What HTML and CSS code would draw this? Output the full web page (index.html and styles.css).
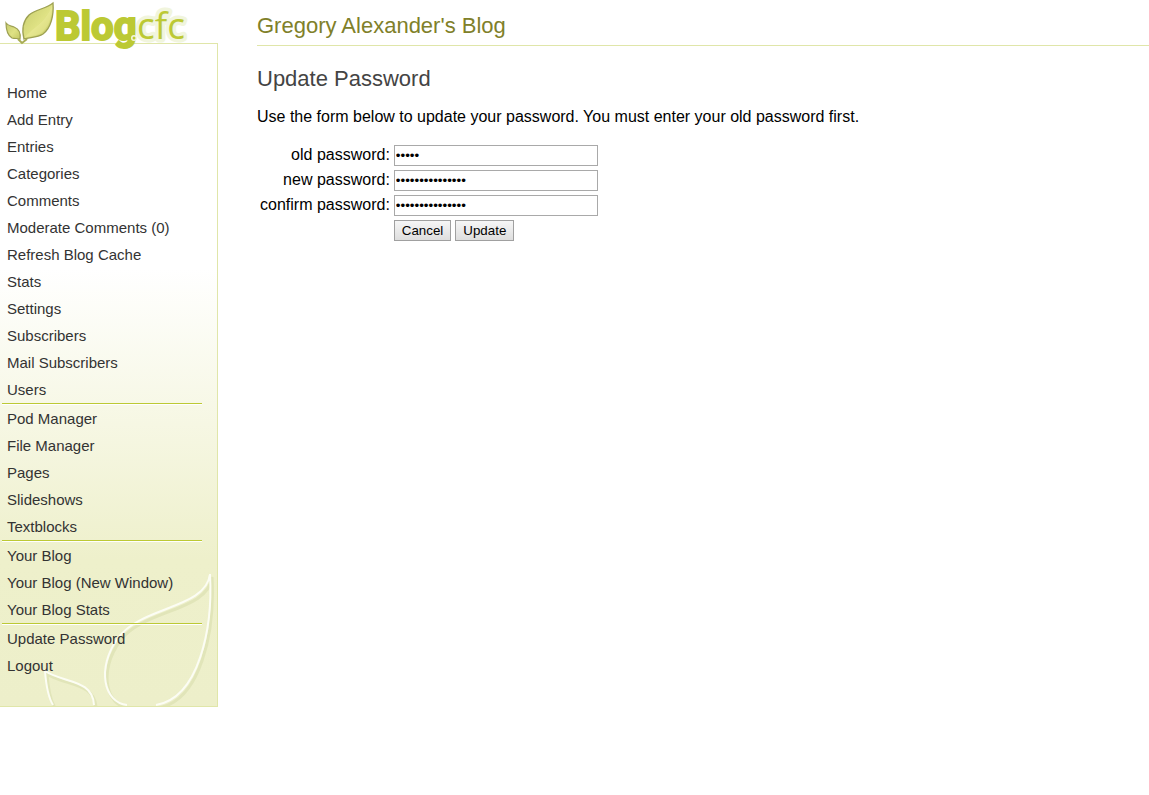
FILE: index.html
```html
<!DOCTYPE html>
<html lang="en">
<head>
<meta charset="utf-8">
<title>Gregory Alexander's Blog - Update Password</title>
<link rel="stylesheet" href="styles.css">
</head>
<body>
<div class="layout">
  <div class="side">
    <svg class="logo" width="200" height="60" viewBox="0 0 200 60" role="img" aria-label="Blog.cfc">
      <defs>
        <linearGradient id="leaf" x1="0" y1="0" x2="1" y2="1">
          <stop offset="0" stop-color="#c5ca6c"/>
          <stop offset="0.55" stop-color="#dfe284"/>
          <stop offset="1" stop-color="#c3c762"/>
        </linearGradient>
      </defs>
      <path d="M24 39C22 31 22 22 29 15C36 9 46 9 53 3C54 15 51 28 43 34C37 38 29 37 24 39Z" fill="url(#leaf)" stroke="#9da052" stroke-width="1.3"/>
      <path d="M20 39C21 33 19 29 14 27C11 26 8 26 6 23C6 29 7 35 12 38C15 39 18 38 20 39Z" fill="url(#leaf)" stroke="#9da052" stroke-width="1.2"/>
      <path d="M25 37C33 28 46 22 52 6C52 18 48 28 41 33C36 36 29 36 25 37Z" fill="#f0eda0" opacity="0.4"/>
      <path d="M18 39L22 43L27 39" fill="none" stroke="#a9ad55" stroke-width="2"/>
      <text class="logo-cfc" x="137" y="39">cfc</text>
      <text class="logo-blog" x="55" y="40">Blog</text>
      <circle cx="134" cy="38" r="3" fill="#f3f6df"/>
      <circle cx="134" cy="38" r="1.500" fill="#bcc934"/>
    </svg>
    <nav class="panel">
      <svg class="leaves" width="217" height="140" viewBox="0 0 217 140" aria-hidden="true">
        <g fill="none" stroke="#e1e5b9" stroke-width="3" transform="translate(2 3)">
          <path d="M127 139C104 137 96 102 118 72C141 40 206 43 210 8C213 62 199 132 156 139"/>
          <path d="M53 139C48 131 46 118 45 105C63 117 93 113 94 139"/>
        </g>
        <g fill="none" stroke="#fcfdf4" stroke-width="2">
          <path d="M127 139C104 137 96 102 118 72C141 40 206 43 210 8C213 62 199 132 156 139"/>
          <path d="M53 139C48 131 46 118 45 105C63 117 93 113 94 139"/>
        </g>
      </svg>
      <ul class="menu">
        <li><a href="#">Home</a></li>
        <li><a href="#">Add Entry</a></li>
        <li><a href="#">Entries</a></li>
        <li><a href="#">Categories</a></li>
        <li><a href="#">Comments</a></li>
        <li><a href="#">Moderate Comments (0)</a></li>
        <li><a href="#">Refresh Blog Cache</a></li>
        <li><a href="#">Stats</a></li>
        <li><a href="#">Settings</a></li>
        <li><a href="#">Subscribers</a></li>
        <li><a href="#">Mail Subscribers</a></li>
        <li><a href="#">Users</a></li>
      </ul>
      <ul class="menu ruled">
        <li><a href="#">Pod Manager</a></li>
        <li><a href="#">File Manager</a></li>
        <li><a href="#">Pages</a></li>
        <li><a href="#">Slideshows</a></li>
        <li><a href="#">Textblocks</a></li>
      </ul>
      <ul class="menu ruled">
        <li><a href="#">Your Blog</a></li>
        <li><a href="#">Your Blog (New Window)</a></li>
        <li><a href="#">Your Blog Stats</a></li>
      </ul>
      <ul class="menu ruled">
        <li><a href="#">Update Password</a></li>
        <li><a href="#">Logout</a></li>
      </ul>
    </nav>
  </div>
  <main class="content">
    <h1 class="blog-title">Gregory Alexander's Blog</h1>
    <h2 class="page-title">Update Password</h2>
    <p class="intro">Use the form below to update your password. You must enter your old password first.</p>
    <form class="form">
      <label for="oldpassword">old password:</label>
      <input class="field" type="password" id="oldpassword" value="abcde">
      <label for="newpassword">new password:</label>
      <input class="field" type="password" id="newpassword" value="abcdefghijklmno">
      <label for="confirmpassword">confirm password:</label>
      <input class="field" type="password" id="confirmpassword" value="abcdefghijklmno">
      <div class="actions">
        <button class="btn" type="button">Cancel</button>
        <button class="btn" type="submit">Update</button>
      </div>
    </form>
  </main>
</div>
</body>
</html>
```
FILE: styles.css
```css
* {
  box-sizing: border-box;
}

body {
  margin: 0;
  background: #fff;
  color: #000;
  font-family: "Liberation Sans", Arial, sans-serif;
  font-size: 16px;
}

.layout {
  display: flex;
  align-items: flex-start;
  gap: 39px;
}

.side {
  flex: 0 0 218px;
  padding-top: 43px;
  position: relative;
}

.logo {
  position: absolute;
  top: 0;
  left: 0;
  z-index: 1;
}

.logo-blog {
  font: bold 40px Roboto, sans-serif;
  fill: #bcc934;
  stroke: #bcc934;
  stroke-width: 2px;
}

.logo-cfc {
  font: 37px "Open Sans", "Noto Sans", sans-serif;
  fill: #bcc934;
  stroke: #f1f5dd;
  stroke-width: 7px;
  stroke-linejoin: round;
  paint-order: stroke;
}

.panel {
  position: relative;
  padding: 35px 15px 27px 2px;
  border: 1px solid #e0e6a9;
  border-left: 0;
  background: linear-gradient(#fff 34%, #eef0cb 78%, #edefca);
}

.leaves {
  position: absolute;
  right: 0;
  bottom: 0;
}

.menu {
  position: relative;
  margin: 0;
  padding: 0;
  list-style: none;
}

.ruled {
  border-top: 1px solid #bcc934;
  box-shadow: inset 0 1px #fff;
  padding-top: 1px;
}

.menu a {
  display: block;
  padding: 0 5px;
  font-size: 15px;
  line-height: 27px;
  color: #333;
  text-decoration: none;
}

.content {
  flex: 1;
  min-width: 0;
}

.blog-title,
.page-title {
  margin: 0;
  font-size: 22px;
  font-weight: normal;
  line-height: 26px;
}

.blog-title {
  padding: 13px 0 6px;
  border-bottom: 1px solid #e0e6a9;
  color: #808029;
}

.page-title {
  margin-top: 20px;
  color: #444;
}

.intro {
  margin: 16px 0;
  line-height: 18px;
}

.form {
  display: grid;
  grid-template-columns: max-content max-content;
  gap: 4px;
  padding: 3px;
  line-height: 19px;
}

.form label {
  text-align: right;
}

.field {
  width: 204px;
  height: 21px;
  padding: 1px;
  border: 1px solid #a9a9a9;
  background: #fff;
  color: #000;
  font-family: "Liberation Sans", Arial, sans-serif;
}

.actions {
  grid-column: 2;
  display: flex;
  gap: 4px;
}

.btn {
  height: 21px;
  padding: 0 7px;
  border: 1px solid #a0a0a0;
  border-radius: 0;
  background: linear-gradient(#f6f6f6, #dedede);
  color: #000;
  font-family: "Liberation Sans", Arial, sans-serif;
}
```
